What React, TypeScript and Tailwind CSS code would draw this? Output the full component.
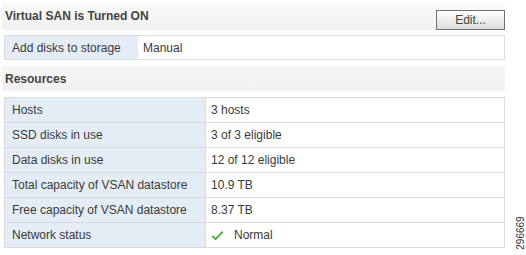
const RESOURCES: { label: string; value: string; ok?: boolean }[] = [
  { label: 'Hosts', value: '3 hosts' },
  { label: 'SSD disks in use', value: '3 of 3 eligible' },
  { label: 'Data disks in use', value: '12 of 12 eligible' },
  { label: 'Total capacity of VSAN datastore', value: '10.9 TB' },
  { label: 'Free capacity of VSAN datastore', value: '8.37 TB' },
  { label: 'Network status', value: 'Normal', ok: true },
];

function Check() {
  return (
    <svg width="13" height="11" viewBox="0 0 13 11" className="mr-[10px]">
      <path d="M1.2 6 L4.6 9.2 L11.8 1.6" fill="none" stroke="#4aa83a" strokeWidth="1.8" strokeLinejoin="round" />
    </svg>
  );
}

export default function App() {
  return (
    <div
      className="relative w-[526px] h-[255px] bg-white text-[12px] text-[#3a3a3a]"
      style={{ fontFamily: '"Liberation Sans", Arial, sans-serif' }}
    >
      <div className="w-[505px] pl-[2px]">
        {/* header */}
        <div className="flex items-center justify-between h-[28px] mt-[2px] bg-gradient-to-b from-[#fafafa] to-[#f1f1f1]">
          <span className="pl-[3px] font-bold text-[#444]">Virtual SAN is Turned ON</span>
          <button className="w-[69px] h-[20px] mt-[8px] border border-[#6f6f6f] bg-gradient-to-b from-white to-[#dcdcdc] text-[12px] text-[#444]">
            Edit...
          </button>
        </div>

        <div className="ml-[2px] mt-[5px] flex h-[25px] border border-[#dcdcdc]">
          <div className="w-[133px] flex items-center pl-[7px] bg-[#e4edf5]">Add disks to storage</div>
          <div className="flex-1 flex items-center pl-[5px]">Manual</div>
        </div>

        <div className="flex items-center h-[25px] mt-[6px] bg-gradient-to-b from-[#f6f6f6] to-[#f1f1f1]">
          <span className="pl-[3px] font-bold text-[#444]">Resources</span>
        </div>

        <div className="ml-[2px] mt-[6px] border border-[#dcdcdc]">
          {RESOURCES.map((r, i) => (
            <div key={r.label} className={`flex ${i > 0 ? 'h-[25px] border-t border-[#dcdcdc]' : 'h-[24px]'}`}>
              <div className="w-[201px] flex items-center pl-[7px] bg-[#e4edf5] border-r border-[#dcdcdc]">{r.label}</div>
              <div className="flex-1 flex items-center pl-[5px]">
                {r.ok && <Check />}
                {r.value}
              </div>
            </div>
          ))}
        </div>
      </div>

      <div className="absolute left-[504px] top-[226px] -rotate-90 text-[10px] text-[#333] leading-none">296669</div>
    </div>
  );
}
